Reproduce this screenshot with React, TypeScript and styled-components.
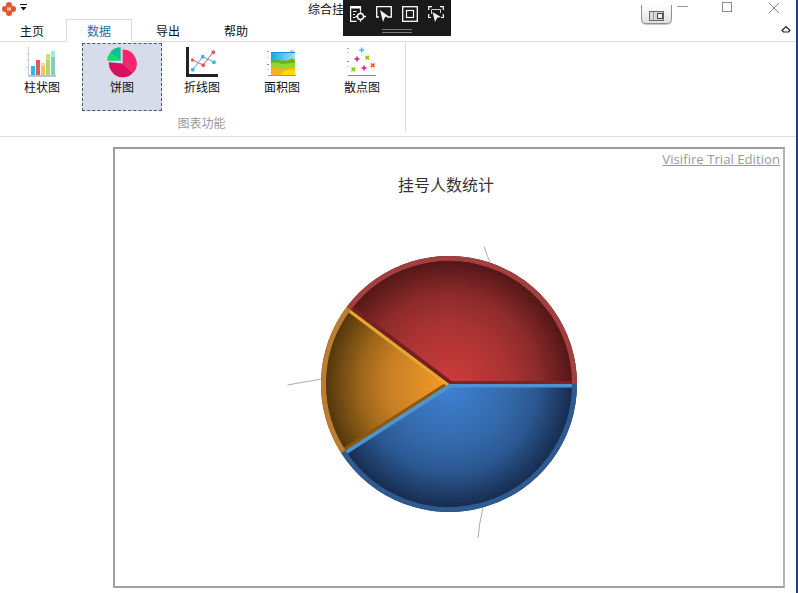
import React from "react";
import styled, { createGlobalStyle } from "styled-components";

const Global = createGlobalStyle`
  html, body { margin: 0; padding: 0; background: #fff; }
  body { font-family: "Noto Sans CJK SC", "Liberation Sans", sans-serif; font-size: 12px; color: #111; }
  * { box-sizing: border-box; }
`;

const Window = styled.div`
  position: relative;
  width: 798px;
  height: 593px;
  overflow: hidden;
  background: #fff;
  border-right: 2px solid #1c3f78;
  display: flex;
  flex-direction: column;
`;

const TitleBar = styled.div`
  height: 19px;
  flex: none;
  display: flex;
  align-items: flex-start;
  position: relative;
`;

const QuickAccess = styled.div`
  width: 308px;
  flex: none;
  display: flex;
  gap: 4px;
  padding: 2px 0 0 2px;
  svg { display: block; }
`;

const WindowTitle = styled.div`
  flex: 1;
  font-size: 12px;
  line-height: 17px;
  white-space: nowrap;
`;

const SnapButton = styled.div`
  width: 31px;
  height: 19px;
  flex: none;
  margin-top: 5px;
  padding-top: 6px;
  border: 1px solid #8f8f8f;
  border-top: none;
  border-radius: 0 0 5px 5px;
  background: linear-gradient(#ffffff, #e0e0e0);
  box-shadow: 0 1px 0 #c8c8c8;
  display: flex;
  align-items: flex-start;
  justify-content: center;
  svg { display: block; }
`;

const Caption = styled.div<{ $w: number }>`
  width: ${(p) => p.$w}px;
  height: 19px;
  flex: none;
  display: flex;
  align-items: flex-start;
  justify-content: center;
  svg { display: block; }
`;

const TabStrip = styled.div`
  height: 23px;
  flex: none;
  display: flex;
  align-items: stretch;
  border-bottom: 1px solid #dcdcdc;
  position: relative;
`;

const Tab = styled.div<{ $w: number; $active?: boolean; $pr?: number }>`
  width: ${(p) => p.$w}px;
  height: ${(p) => (p.$active ? "23px" : "22px")};
  padding-right: ${(p) => p.$pr ?? 0}px;
  display: flex;
  align-items: center;
  justify-content: center;
  font-size: 12px;
  color: ${(p) => (p.$active ? "#2b6c9e" : "#111")};
  background: #fff;
  border: ${(p) => (p.$active ? "1px solid #dcdcdc" : "none")};
  border-bottom: ${(p) => (p.$active ? "1px solid #fff" : "none")};
`;

const Collapse = styled.div`
  position: absolute;
  right: 5px;
  top: 6px;
  svg { display: block; }
`;

const Ribbon = styled.div`
  height: 95px;
  flex: none;
  display: flex;
  border-bottom: 1px solid #dcdcdc;
`;

const Group = styled.div`
  width: 406px;
  height: 90px;
  padding: 1px 0 0 2px;
  border-right: 1px solid #dcdcdc;
  display: flex;
  flex-direction: column;
`;

const GroupItems = styled.div`
  display: flex;
  height: 68px;
`;

const GroupLabel = styled.div`
  text-align: center;
  color: #9a9a9a;
  font-size: 12px;
  line-height: 16px;
  margin-top: 4px;
  padding-right: 4px;
`;

const Item = styled.div<{ $selected?: boolean }>`
  width: 80px;
  height: 68px;
  display: flex;
  flex-direction: column;
  align-items: center;
  padding-top: 1px;
  border: 1px ${(p) => (p.$selected ? "dashed #4a5570" : "solid transparent")};
  background: ${(p) => (p.$selected ? "#d6dce9" : "transparent")};
  svg { display: block; flex: none; }
`;

const ItemLabel = styled.div`
  font-size: 12px;
  line-height: 16px;
  margin-top: 0;
  color: #111;
`;

const Content = styled.div`
  flex: 1;
  padding: 10px 0 0 113px;
`;

const ChartFrame = styled.div`
  position: relative;
  width: 672px;
  height: 441px;
  border: 2px solid;
  border-color: #9c9c9c #b4b4b4 #a0a0a0 #a0a0a0;
  display: flex;
  flex-direction: column;
  align-items: center;
`;

const Watermark = styled.div`
  position: absolute;
  top: 2px;
  right: 3px;
  font-family: "Open Sans", "Liberation Sans", sans-serif;
  font-size: 13.2px;
  line-height: 17px;
  color: #9a9a9a;
  text-decoration: underline;
`;

const ChartTitle = styled.div`
  margin-top: 23px;
  padding-right: 6px;
  font-size: 16px;
  line-height: 24px;
  color: #333;
`;

const PieSvg = styled.svg`
  display: block;
  margin-top: 28px;
  flex: none;
`;

const Overlay = styled.div`
  position: absolute;
  left: 343px;
  top: 0;
  width: 108px;
  height: 36px;
  background: #1a1a1a;
  display: flex;
  flex-direction: column;
  align-items: center;
`;

const OverlayIcons = styled.div`
  display: flex;
  gap: 10px;
  padding-top: 6px;
  svg { display: block; }
`;

const Grip = styled.div`
  width: 30px;
  height: 4px;
  margin-top: 7px;
  border-top: 1px solid #7a7a7a;
  border-bottom: 1px solid #7a7a7a;
`;

const BarIcon = () => (
  <svg width="34" height="34" viewBox="0 0 34 34">
    <rect x="3" y="2" width="1" height="28" fill="#c4cbe0" />
    <rect x="1" y="8" width="2" height="1" fill="#d4d9e6" />
    <rect x="1" y="15" width="2" height="1" fill="#d4d9e6" />
    <rect x="1" y="22" width="2" height="1" fill="#d4d9e6" />
    <rect x="6" y="21" width="4" height="9" fill="#22bdf0" />
    <rect x="11" y="15" width="4" height="15" fill="#cc6262" />
    <rect x="11" y="15" width="4" height="3" fill="#ee5050" />
    <rect x="16" y="18" width="4" height="12" fill="#fcbe62" />
    <rect x="16" y="18" width="4" height="3" fill="#fcd898" />
    <rect x="21" y="9" width="4" height="21" fill="#a6d87c" />
    <rect x="21" y="9" width="4" height="6" fill="#c6e474" />
    <rect x="26" y="6" width="4" height="24" fill="#7ed0b8" />
    <rect x="26" y="6" width="4" height="6" fill="#a8ead4" />
    <rect x="3" y="30" width="28" height="2" fill="#b8c0dc" />
  </svg>
);

const PieIcon = () => (
  <svg width="34" height="34" viewBox="0 0 34 34">
    <path d="M17.7 18.5 L17.7 4.5 A14 14 0 0 1 28 28 Z" fill="#f5266f" />
    <path d="M17.7 18.5 L28 28 A14 14 0 0 1 3.9 17.3 Z" fill="#d70f5e" />
    <path d="M15.7 15.7 L15.7 2.3 A13.4 13.4 0 0 0 5 7.7 Z" fill="#12bd92" />
    <path d="M15.7 15.7 L5 7.7 A13.4 13.4 0 0 0 2.3 15.7 Z" fill="#12da6c" />
  </svg>
);

const LineIcon = () => (
  <svg width="34" height="34" viewBox="0 0 34 34">
    <rect x="1" y="2" width="3" height="30" fill="#222" />
    <rect x="1" y="29" width="32" height="3" fill="#222" />
    <polyline points="7.5,15 18,20 28.3,7" fill="none" stroke="#e8505a" strokeWidth="1" />
    <polyline points="7.7,25 17.7,11.7 29,17" fill="none" stroke="#48b0e8" strokeWidth="1" />
    <rect x="6" y="13.5" width="3" height="3" rx="1" fill="#e8505a" />
    <rect x="16.5" y="18.5" width="3.4" height="3.4" rx="1" fill="#e8505a" />
    <rect x="26.6" y="5.5" width="3.4" height="3.4" rx="1" fill="#e8505a" />
    <rect x="6" y="23" width="3.5" height="3.5" rx="1" fill="#48b0e8" />
    <rect x="16" y="10" width="3.5" height="3.5" rx="1" fill="#48b0e8" />
    <rect x="27.2" y="15.4" width="3.5" height="3.5" rx="1" fill="#48b0e8" />
  </svg>
);

const AreaIcon = () => (
  <svg width="34" height="34" viewBox="0 0 34 34">
    <defs>
      <linearGradient id="sky" x1="0" x2="1" y1="0" y2="0">
        <stop offset="0" stopColor="#0fa9e2" />
        <stop offset="1" stopColor="#a6e0f2" />
      </linearGradient>
    </defs>
    <rect x="6" y="7" width="24" height="23" fill="url(#sky)" />
    <rect x="6" y="7" width="24" height="1" fill="#0a90e0" />
    <path d="M6 16 L12 15 L17 16 L23 15.5 L27 13.5 L30 15 V24 H6 Z" fill="#6fb400" />
    <path d="M6 18 L12 17.5 L17 19 L23 18.5 L30 17.5 V30 H6 Z" fill="#94d62e" />
    <path d="M6 22 L13 23 L18 24.5 L25 22 L30 22.5 V30 H6 Z" fill="#fbb020" />
    <path d="M15 30 L19 26 L25 24 L30 24.5 V30 Z" fill="#ffdc00" />
    <rect x="3" y="30" width="28" height="1" fill="#999" />
    <rect x="2" y="6" width="2" height="1" fill="#aaa" />
    <rect x="2" y="12" width="2" height="1" fill="#ccc" />
    <rect x="2" y="19" width="2" height="1" fill="#888" />
    <rect x="2" y="24" width="2" height="1" fill="#ccc" />
    <rect x="25" y="5" width="4" height="2" fill="#ccc" />
  </svg>
);

const Plus = ({ x, y, c }: { x: number; y: number; c: string }) => (
  <path d={`M${x - 2.5} ${y} H${x + 2.5} M${x} ${y - 2.5} V${y + 2.5}`} stroke={c} strokeWidth="1.4" fill="none" />
);

const Cross = ({ x, y, c }: { x: number; y: number; c: string }) => (
  <path d={`M${x - 1.8} ${y - 1.8} L${x + 1.8} ${y + 1.8} M${x + 1.8} ${y - 1.8} L${x - 1.8} ${y + 1.8}`} stroke={c} strokeWidth="1.5" fill="none" />
);

const ScatterIcon = () => (
  <svg width="34" height="34" viewBox="0 0 34 34">
    <rect x="2" y="3" width="2" height="1" fill="#aaa" />
    <rect x="2" y="7" width="2" height="1" fill="#ccc" />
    <rect x="2" y="16" width="2" height="1" fill="#888" />
    <rect x="2" y="21" width="2" height="1" fill="#ccc" />
    <Plus x={16.7} y={5} c="#3cc0ee" />
    <Plus x={12} y={14} c="#c8189a" />
    <Cross x={22.3} y={12.7} c="#88c810" />
    <Plus x={19} y={23} c="#e0109a" />
    <Cross x={27.7} y={20.3} c="#f05010" />
    <Cross x={8.3} y={24.3} c="#88c810" />
    <rect x="3" y="30" width="28" height="1" fill="#888" />
  </svg>
);

const wedge = (x1: number, y1: number, x2: number, y2: number, r = 128) =>
  `M162 160 L${162 + x1} ${160 + y1} A${r} ${r} 0 0 1 ${162 + x2} ${160 + y2} Z`;
const rim = (x1: number, y1: number, x2: number, y2: number) =>
  `M${162 + x1} ${160 + y1} A128 128 0 0 1 ${162 + x2} ${160 + y2}`;
const spoke = (x: number, y: number, dx = 0, dy = 0) =>
  `M${162 + dx} ${160 + dy} L${162 + x + dx} ${160 + y + dy}`;

const Pie = () => (
  <PieSvg width="324" height="320" viewBox="0 0 324 320">
    <defs>
      <radialGradient id="red" gradientUnits="userSpaceOnUse" cx="162" cy="160" r="123">
        <stop offset="0" stopColor="#cf3c3c" />
        <stop offset="0.5" stopColor="#a83232" />
        <stop offset="0.72" stopColor="#8e2b2b" />
        <stop offset="1" stopColor="#551717" />
      </radialGradient>
      <radialGradient id="blue" gradientUnits="userSpaceOnUse" cx="162" cy="160" r="123">
        <stop offset="0" stopColor="#3f82d3" />
        <stop offset="0.5" stopColor="#3369aa" />
        <stop offset="0.72" stopColor="#2b5790" />
        <stop offset="1" stopColor="#172d50" />
      </radialGradient>
      <radialGradient id="orange" gradientUnits="userSpaceOnUse" cx="162" cy="160" r="123">
        <stop offset="0" stopColor="#f69b28" />
        <stop offset="0.5" stopColor="#c87f24" />
        <stop offset="0.72" stopColor="#9c6619" />
        <stop offset="1" stopColor="#54370d" />
      </radialGradient>
      <clipPath id="cRed"><path d={wedge(-102.3, -77, 128, 0)} /></clipPath>
      <clipPath id="cBlue"><path d={wedge(128, 0, -107.8, 69)} /></clipPath>
      <clipPath id="cOrange"><path d={wedge(-107.8, 69, -102.3, -77)} /></clipPath>
    </defs>

    <path d="M197.3 22.7 Q199 30 203 38" stroke="#aaa" fill="none" />
    <path d="M0.5 161 L34 155" stroke="#aaa" fill="none" />
    <path d="M196 284 Q192 300 191 314" stroke="#aaa" fill="none" />

    <path d={wedge(-102.3, -77, 128, 0)} fill="url(#red)" />
    <g clipPath="url(#cRed)">
      <path d={spoke(128, 0)} stroke="#7c2424" strokeWidth="6" />
      <path d={spoke(-102.3, -77)} stroke="#74201f" strokeWidth="8" />
      <path d={rim(-102.3, -77, 128, 0)} stroke="#a33f3f" strokeWidth="10" fill="none" />
    </g>

    <path d={wedge(128, 0, -107.8, 69)} fill="url(#blue)" />
    <g clipPath="url(#cBlue)">
      <path d={spoke(128, 0)} stroke="#4c92d4" strokeWidth="7" />
      <path d={spoke(-107.8, 69)} stroke="#4f94d2" strokeWidth="8" />
      <path d={rim(128, 0, -107.8, 69)} stroke="#2e5a90" strokeWidth="10" fill="none" />
    </g>

    <path d={wedge(-107.8, 69, -102.3, -77)} fill="url(#orange)" />
    <g clipPath="url(#cOrange)">
      <path d={spoke(-107.8, 69)} stroke="#8a5712" strokeWidth="6" />
      <path d={spoke(-102.3, -77)} stroke="#e4a82c" strokeWidth="6" />
      <path d={rim(-107.8, 69, -102.3, -77)} stroke="#bd7d30" strokeWidth="10" fill="none" />
    </g>
  </PieSvg>
);

const items: { label: string; icon: React.ReactNode; selected?: boolean }[] = [
  { label: "柱状图", icon: <BarIcon /> },
  { label: "饼图", icon: <PieIcon />, selected: true },
  { label: "折线图", icon: <LineIcon /> },
  { label: "面积图", icon: <AreaIcon /> },
  { label: "散点图", icon: <ScatterIcon /> },
];

export default function App() {
  return (
    <>
      <Global />
      <Window>
        <TitleBar>
          <QuickAccess>
            <svg width="14" height="14" viewBox="0 0 14 14">
              <g fill="#e8522c">
                <circle cx="7" cy="3" r="3" />
                <circle cx="3" cy="7" r="3" />
                <circle cx="11" cy="7" r="3" />
                <circle cx="7" cy="11" r="3" />
              </g>
              <rect x="5" y="5.5" width="4" height="3" fill="#f8c8b8" />
            </svg>
            <svg width="7" height="10" viewBox="0 0 7 10">
              <rect x="0" y="2" width="7" height="1" fill="#111" />
              <path d="M0.5 5 H6.5 L3.5 8.5 Z" fill="#111" />
            </svg>
          </QuickAccess>
          <WindowTitle>综合挂号统计</WindowTitle>
          <SnapButton>
            <svg width="15" height="10" viewBox="0 0 15 10">
              <rect x="0.5" y="0.5" width="14" height="9" fill="#d8d8d8" stroke="#666" />
              <rect x="4" y="1" width="1" height="8" fill="#999" />
              <rect x="8.5" y="2.5" width="5" height="5" fill="#f0f0f0" stroke="#444" />
            </svg>
          </SnapButton>
          <Caption $w={20}>
            <svg width="11" height="8" viewBox="0 0 11 8"><rect y="6" width="11" height="1" fill="#999" /></svg>
          </Caption>
          <Caption $w={70}>
            <svg width="11" height="12" viewBox="0 0 11 12"><rect x="0.5" y="2.5" width="9" height="9" fill="none" stroke="#888" /></svg>
          </Caption>
          <Caption $w={23}>
            <svg width="12" height="14" viewBox="0 0 12 14"><path d="M1 3 L11 13 M11 3 L1 13" stroke="#888" fill="none" /></svg>
          </Caption>
          <Caption $w={11} />
        </TitleBar>
        <TabStrip>
          <Tab $w={66} $pr={2}>主页</Tab>
          <Tab $w={66} $active>数据</Tab>
          <Tab $w={72}>导出</Tab>
          <Tab $w={64}>帮助</Tab>
          <Collapse>
            <svg width="10" height="8" viewBox="0 0 10 8">
              <path d="M1 5.5 L5 1.5 L9 5.5 L7.5 7 H2.5 Z" fill="none" stroke="#222" strokeWidth="1.2" />
            </svg>
          </Collapse>
        </TabStrip>
        <Ribbon>
          <Group>
            <GroupItems>
              {items.map((it) => (
                <Item key={it.label} $selected={it.selected}>
                  {it.icon}
                  <ItemLabel>{it.label}</ItemLabel>
                </Item>
              ))}
            </GroupItems>
            <GroupLabel>图表功能</GroupLabel>
          </Group>
        </Ribbon>
        <Content>
          <ChartFrame>
            <Watermark>Visifire Trial Edition</Watermark>
            <ChartTitle>挂号人数统计</ChartTitle>
            <Pie />
          </ChartFrame>
        </Content>
        <Overlay>
          <OverlayIcons>
            <svg width="16" height="16" viewBox="0 0 16 16" fill="none" stroke="#fff">
              <rect x="0.6" y="0" width="10" height="2.5" fill="#fff" stroke="none" />
              <path d="M0.6 0 V15.4 H6.5 M10.5 0 V5" strokeWidth="1.2" />
              <path d="M3 5.5 H6.5 M3 8.5 H5 M3 11.5 H5.5" strokeWidth="1.1" />
              <circle cx="10.5" cy="10.5" r="3" strokeWidth="1.4" />
              <path d="M10.5 5.5 V7.5 M10.5 13.5 V15.7 M5.5 10.5 H7.5 M13.5 10.5 H16" strokeWidth="1.3" />
            </svg>
            <svg width="16" height="16" viewBox="0 0 16 16" fill="none">
              <path d="M3 11 H0.7 V0.7 H15.3 V11 H11" stroke="#fff" strokeWidth="1.3" />
              <path d="M4 4 L13 10.5 L9 11 L7 16 Z" fill="#f2f2f2" />
            </svg>
            <svg width="16" height="16" viewBox="0 0 16 16" fill="none" stroke="#fff">
              <rect x="0.7" y="0.7" width="14.6" height="14.6" strokeWidth="1.3" />
              <rect x="4.5" y="4.5" width="7" height="7" strokeWidth="1.2" />
            </svg>
            <svg width="16" height="16" viewBox="0 0 16 16" fill="none">
              <path d="M0.7 4 V0.7 H4 M12 0.7 H15.3 V4 M0.7 8 V11.5 H3 M15.3 8 V11.5 H13" stroke="#fff" strokeWidth="1.2" />
              <path d="M3.5 8 V3.5 H12.5 V7" stroke="#cfcfcf" strokeWidth="1" />
              <path d="M4.5 6 L13 11 L9.2 11.8 L7 16 Z" fill="#f2f2f2" />
            </svg>
          </OverlayIcons>
          <Grip />
        </Overlay>
      </Window>
    </>
  );
}
